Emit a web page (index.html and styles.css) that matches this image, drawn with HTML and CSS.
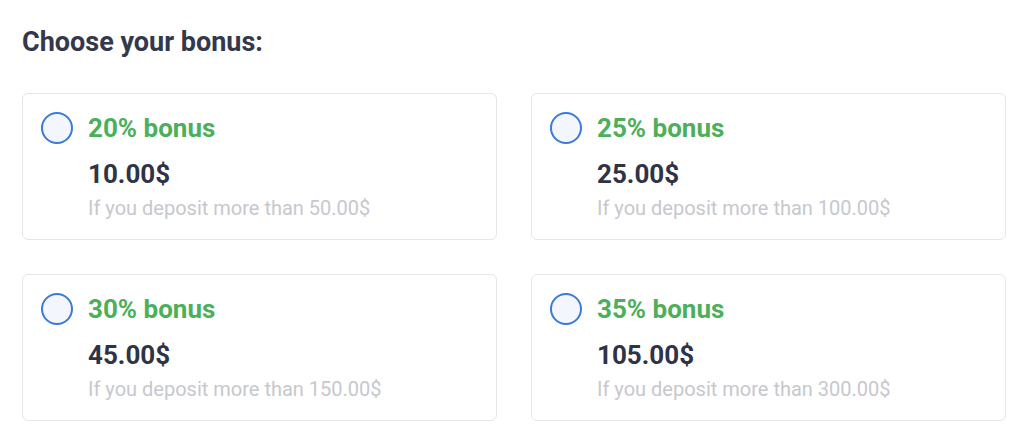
FILE: index.html
```html
<!DOCTYPE html>
<html lang="en">
<head>
<meta charset="utf-8">
<title>Choose your bonus</title>
<link rel="stylesheet" href="styles.css">
</head>
<body>
<main class="page">
  <h2 class="title">Choose your bonus:</h2>
  <div class="grid">
    <label class="card">
      <span class="radio"></span>
      <span class="info">
        <span class="bonus">20% bonus</span>
        <span class="amount">10.00$</span>
        <span class="cond">If you deposit more than 50.00$</span>
      </span>
    </label>
    <label class="card">
      <span class="radio"></span>
      <span class="info">
        <span class="bonus">25% bonus</span>
        <span class="amount">25.00$</span>
        <span class="cond">If you deposit more than 100.00$</span>
      </span>
    </label>
    <label class="card">
      <span class="radio"></span>
      <span class="info">
        <span class="bonus">30% bonus</span>
        <span class="amount">45.00$</span>
        <span class="cond">If you deposit more than 150.00$</span>
      </span>
    </label>
    <label class="card">
      <span class="radio"></span>
      <span class="info">
        <span class="bonus">35% bonus</span>
        <span class="amount">105.00$</span>
        <span class="cond">If you deposit more than 300.00$</span>
      </span>
    </label>
  </div>
</main>
</body>
</html>
```

FILE: styles.css
```css
* { box-sizing: border-box; }
html, body { margin: 0; padding: 0; background: #ffffff; }
body { font-family: Roboto, "Liberation Sans", Arial, sans-serif; }

.page {
  padding: 26px 24px 0 22px;
}

.title {
  margin: 0;
  font-size: 27px;
  line-height: 32px;
  font-weight: 700;
  color: #33384c;
}

.grid {
  margin-top: 35px;
  display: grid;
  grid-template-columns: 1fr 1fr;
  column-gap: 34px;
  row-gap: 34px;
}

.card {
  display: flex;
  align-items: flex-start;
  gap: 15px;
  padding: 18px 18px 19px 18px;
  border: 1px solid #e6e6e8;
  border-radius: 6px;
  background: #ffffff;
}

.radio {
  flex: none;
  width: 32px;
  height: 32px;
  border-radius: 50%;
  border: 2px solid #3c79d8;
  background: #f3f6fc;
}

.info {
  display: flex;
  flex-direction: column;
}

.bonus {
  font-size: 26px;
  line-height: 32px;
  font-weight: 700;
  color: #4caf5a;
}

.amount {
  margin-top: 14px;
  font-size: 26px;
  line-height: 32px;
  font-weight: 700;
  color: #2f3346;
}

.cond {
  margin-top: 6px;
  font-size: 20px;
  line-height: 24px;
  color: #c6c8ce;
}
```
